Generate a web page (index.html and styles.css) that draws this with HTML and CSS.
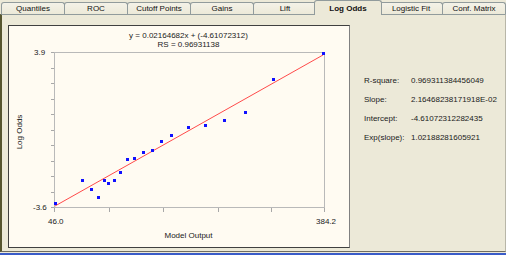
FILE: index.html
```html
<!DOCTYPE html>
<html>
<head>
<meta charset="utf-8">
<link rel="stylesheet" href="styles.css">
</head>
<body>
<div class="window">
  <div class="tabs">
    <div class="tab">Quantiles</div>
    <div class="tab">ROC</div>
    <div class="tab">Cutoff Points</div>
    <div class="tab">Gains</div>
    <div class="tab">Lift</div>
    <div class="tab active">Log Odds</div>
    <div class="tab">Logistic Fit</div>
    <div class="tab">Conf. Matrix</div>
  </div>
  <div class="panel">
    <div class="chart">
      <svg class="plot" width="340" height="221" viewBox="9 26 340 221">
        <text class="lbl" x="188.5" y="38" text-anchor="middle">y = 0.02164682x + (-4.61072312)</text>
        <text class="lbl" x="188.5" y="47" text-anchor="middle">RS = 0.96931138</text>
        <rect class="frame" x="54.5" y="52.5" width="270" height="155"/>
        <path class="ticks" d="M51 68.5H54M51 83.5H54M51 99.5H54M51 114.5H54M51 130.5H54M51 145.5H54M51 161.5H54M51 176.5H54M51 192.5H54M51 52.5H54M51 207.5H54M54.5 208V212M109.5 208V212M163.5 208V212M218.5 208V212M271.5 208V212M324.5 208V212"/>
        <line class="fit" x1="55" y1="206" x2="323" y2="55"/>
        <g class="pts">
          <rect x="54" y="202" width="3" height="3"/>
          <rect x="81" y="179" width="3" height="3"/>
          <rect x="90" y="188" width="3" height="3"/>
          <rect x="97" y="196" width="3" height="3"/>
          <rect x="103" y="179" width="3" height="3"/>
          <rect x="107" y="182" width="3" height="3"/>
          <rect x="113" y="179" width="3" height="3"/>
          <rect x="119" y="171" width="3" height="3"/>
          <rect x="126" y="158" width="3" height="3"/>
          <rect x="133" y="157" width="3" height="3"/>
          <rect x="142" y="151" width="3" height="3"/>
          <rect x="151" y="149" width="3" height="3"/>
          <rect x="160" y="140" width="3" height="3"/>
          <rect x="170" y="134" width="3" height="3"/>
          <rect x="187" y="126" width="3" height="3"/>
          <rect x="204" y="124" width="3" height="3"/>
          <rect x="223" y="119" width="3" height="3"/>
          <rect x="244" y="111" width="3" height="3"/>
          <rect x="272" y="78" width="3" height="3"/>
          <rect x="322" y="52" width="3" height="3"/>
        </g>
        <text class="lbl" x="34" y="55">3.9</text>
        <text class="lbl" x="33" y="210">-3.6</text>
        <text class="lbl" x="48" y="224">46.0</text>
        <text class="lbl" x="316" y="224">384.2</text>
        <text class="lbl" x="188.5" y="238" text-anchor="middle">Model Output</text>
        <text class="lbl" transform="translate(22,132) rotate(-90)" text-anchor="middle">Log Odds</text>
      </svg>
    </div>
    <div class="stats">
      <span class="k">R-square:</span><span class="v">0.969311384456049</span>
      <span class="k">Slope:</span><span class="v">2.16468238171918E-02</span>
      <span class="k">Intercept:</span><span class="v">-4.61072312282435</span>
      <span class="k">Exp(slope):</span><span class="v">1.02188281605921</span>
    </div>
  </div>
  <div class="footer"></div>
</div>
</body>
</html>
```
FILE: styles.css
```css
html, body {
  margin: 0;
  padding: 0;
  background: #ece9d8;
}
body {
  font-family: "Liberation Sans", Arial, sans-serif;
  font-size: 8px;
  color: #000;
}
.window {
  width: 506px;
  height: 255px;
  display: flex;
  flex-direction: column;
  overflow: hidden;
}
.tabs {
  height: 14px;
  display: flex;
  align-items: flex-end;
  padding-left: 1px;
}
.tab {
  width: 64px;
  height: 12px;
  box-sizing: border-box;
  margin-left: -1px;
  border: 1px solid #919b9c;
  border-bottom: none;
  border-radius: 3px 3px 0 0;
  background: linear-gradient(#f4f2e8, #ece9d8);
  text-align: center;
  line-height: 11px;
  color: #111;
}
.tab:first-child {
  margin-left: 0;
}
.tab.active {
  position: relative;
  z-index: 1;
  height: 15px;
  margin: 0 -2px -1px -3px;
  width: 68px;
  background: #ece9d8;
  font-weight: bold;
  line-height: 15px;
}
.panel {
  flex: none;
  height: 236px;
  border-top: 1px solid #919b9c;
  border-left: 2px solid #56552f;
  border-right: 1px solid #b8b6a8;
  border-bottom: 1px solid #6f6d60;
  display: flex;
  align-items: flex-start;
}
.chart {
  margin: 10px 0 0 6px;
  width: 342px;
  height: 223px;
  box-sizing: border-box;
  border: 1px solid #404040;
  border-right-color: #808080;
  background: #fffbf2;
}
.plot {
  display: block;
}
.lbl {
  font-family: "Liberation Sans", Arial, sans-serif;
  font-size: 8px;
  fill: #1a1a1a;
}
.frame {
  fill: none;
  stroke: #b9b9b9;
}
.ticks {
  stroke: #a8a8a8;
  fill: none;
}
.fit {
  stroke: #ff4a4a;
  stroke-width: 1;
}
.pts rect {
  fill: #1010ff;
  shape-rendering: crispEdges;
}
.stats {
  margin: 56px 0 0 14px;
  display: grid;
  grid-template-columns: 47px auto;
  grid-auto-rows: 19px;
  align-items: center;
  color: #1a1a1a;
}
.footer {
  height: 2px;
  border-top: 1px solid #ece9d8;
  background: #3a5cc8;
}
```
